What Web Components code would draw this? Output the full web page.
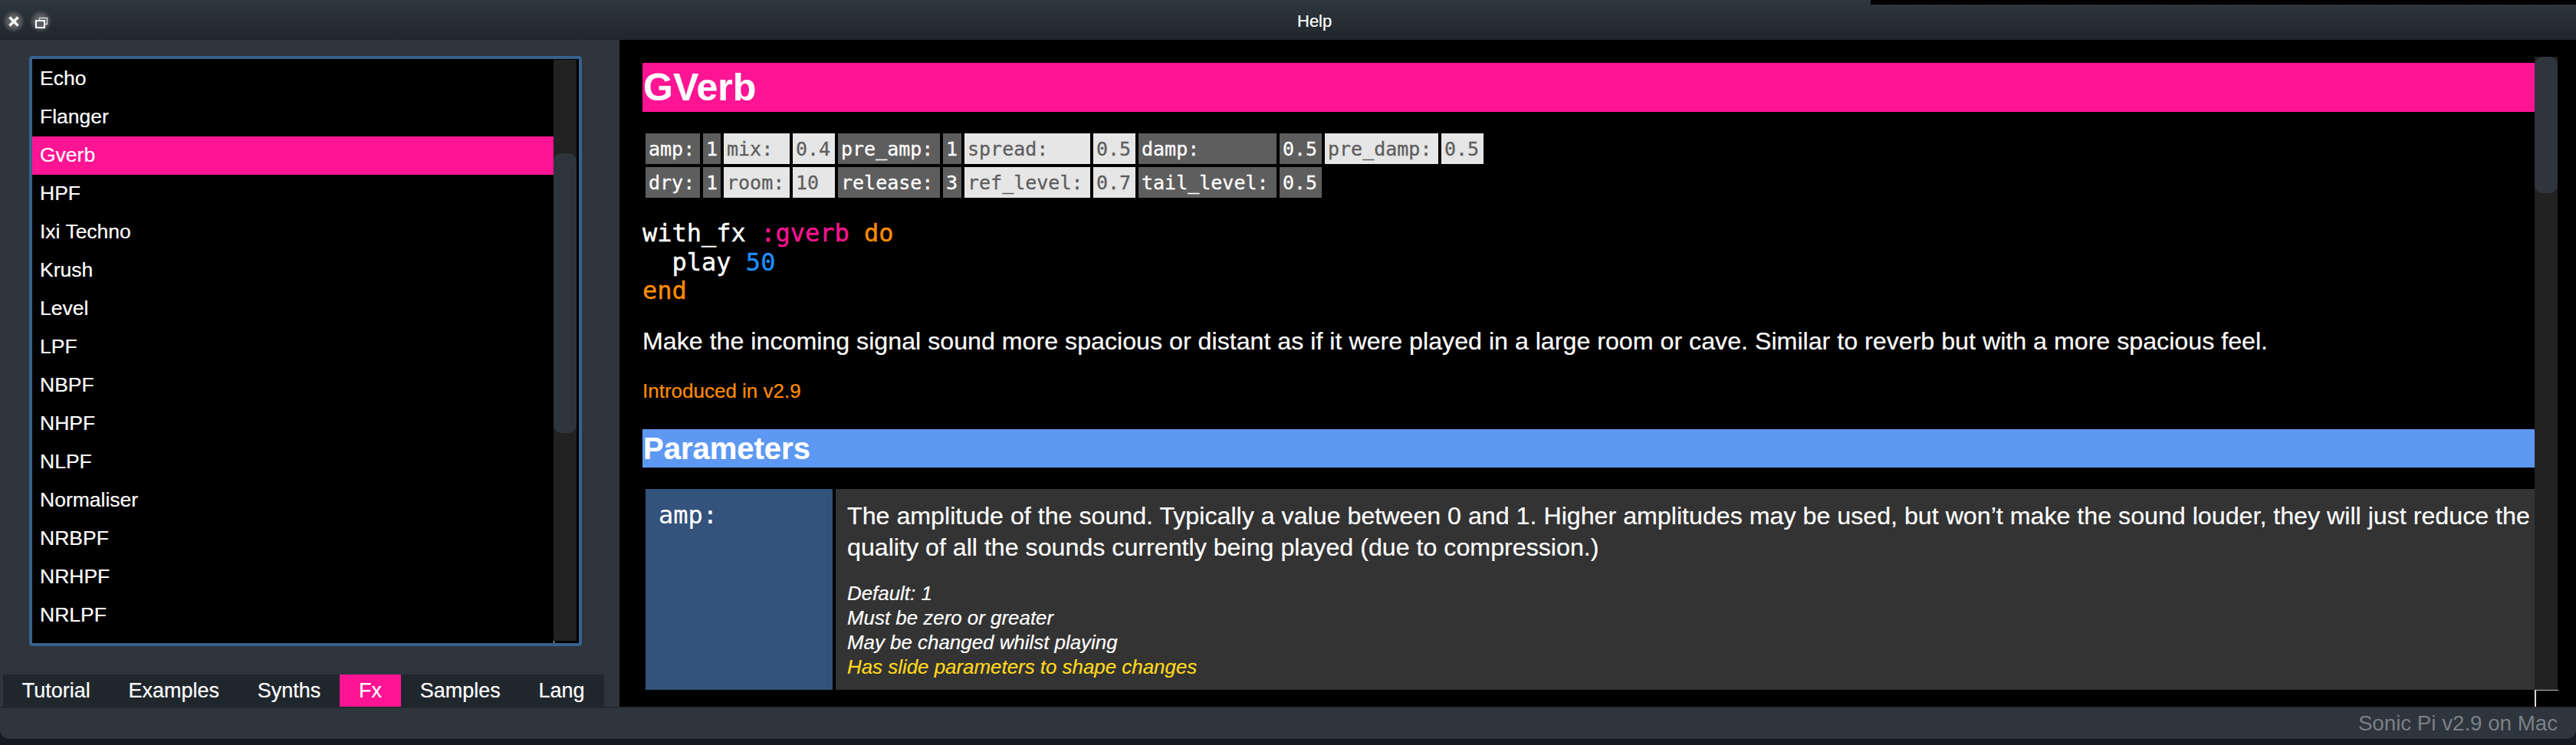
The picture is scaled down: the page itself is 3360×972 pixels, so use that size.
<!DOCTYPE html>
<html>
<head>
<meta charset="utf-8">
<title>Help</title>
<style>
html, body { margin: 0; height: 100%; background: #14181f; overflow: hidden; }
body { font-family: "Liberation Sans", Arial, sans-serif; color: #fff; -webkit-text-stroke: 0.2px; }
</style>
</head>
<body>
<help-window>
  <title-bar slot="title">Help</title-bar>
  <side-panel slot="side">
    <fx-list>
      <fx-item>Echo</fx-item>
      <fx-item>Flanger</fx-item>
      <fx-item selected>Gverb</fx-item>
      <fx-item>HPF</fx-item>
      <fx-item>Ixi Techno</fx-item>
      <fx-item>Krush</fx-item>
      <fx-item>Level</fx-item>
      <fx-item>LPF</fx-item>
      <fx-item>NBPF</fx-item>
      <fx-item>NHPF</fx-item>
      <fx-item>NLPF</fx-item>
      <fx-item>Normaliser</fx-item>
      <fx-item>NRBPF</fx-item>
      <fx-item>NRHPF</fx-item>
      <fx-item>NRLPF</fx-item>
    </fx-list>
    <tab-bar>
      <tab-item>Tutorial</tab-item>
      <tab-item>Examples</tab-item>
      <tab-item>Synths</tab-item>
      <tab-item active>Fx</tab-item>
      <tab-item>Samples</tab-item>
      <tab-item>Lang</tab-item>
    </tab-bar>
  </side-panel>
  <doc-pane slot="doc">
    <doc-heading>GVerb</doc-heading>
    <arg-grid></arg-grid>
    <code-block></code-block>
    <doc-text>
      <p>Make the incoming signal sound more spacious or distant as if it were played in a large room or cave. Similar to reverb but with a more spacious feel.</p>
      <p class="intro">Introduced in v2.9</p>
    </doc-text>
    <doc-heading kind="section">Parameters</doc-heading>
    <param-row name="amp:">
      The amplitude of the sound. Typically a value between 0 and 1. Higher amplitudes may be used, but won’t make the sound louder, they will just reduce the<br>quality of all the sounds currently being played (due to compression.)
      <span slot="notes">Default: 1</span>
      <span slot="notes">Must be zero or greater</span>
      <span slot="notes">May be changed whilst playing</span>
      <span slot="notes" style="color:#ffd91a">Has slide parameters to shape changes</span>
    </param-row>
  </doc-pane>
  <status-bar slot="status">Sonic Pi v2.9 on Mac</status-bar>
</help-window>

<script>
function shadow(el, html) {
  el.attachShadow({ mode: "open" }).innerHTML = html;
}

class HelpWindow extends HTMLElement {
  constructor() {
    super();
    shadow(this, `<style>
      :host { display: flex; flex-direction: column; position: relative; height: 964px; background: #2e353d; border-radius: 0 0 12px 12px; overflow: hidden; }
      .main { display: flex; height: 870px; }
      /* bit of another window peeking over the top right */
      .other { position: absolute; left: 2440px; right: 0; top: 0; height: 6px; background: #000; }
    </style>
    <slot name="title"></slot>
    <div class="main"><slot name="side"></slot><slot name="doc"></slot></div>
    <slot name="status"></slot>
    <div class="other"></div>`);
  }
}

class TitleBar extends HTMLElement {
  constructor() {
    super();
    shadow(this, `<style>
      :host { display: flex; align-items: center; height: 52px; box-sizing: border-box; padding: 4px 0 0 4px; gap: 7px; background: linear-gradient(#2f383f, #1f262b); }
      svg { display: block; width: 28px; height: 28px; }
      .title { margin-left: 1618px; font-size: 22px; color: #fff; }
    </style>
    <svg viewBox="0 0 28 28">
      <defs><radialGradient id="g"><stop offset="0.55" stop-color="#5c5f62"/><stop offset="1" stop-color="#5c5f62" stop-opacity="0.1"/></radialGradient></defs>
      <circle cx="14" cy="14" r="14" fill="url(#g)"/>
      <path d="M8.5 8.5 19.5 19.5M19.5 8.5 8.5 19.5" stroke="#f4f4f4" stroke-width="3.6" fill="none"/>
    </svg>
    <svg viewBox="0 0 28 28">
      <defs><radialGradient id="h"><stop offset="0.55" stop-color="#5c5f62"/><stop offset="1" stop-color="#5c5f62" stop-opacity="0.1"/></radialGradient></defs>
      <circle cx="14" cy="14" r="14" fill="url(#h)"/>
      <rect x="8" y="13" width="11" height="9" fill="none" stroke="#fff" stroke-width="2"/>
      <path d="M12.5 12V9.5H22.5V17.5H20" fill="none" stroke="#d8d8d8" stroke-width="1.4"/>
    </svg>
    <div class="title"><slot></slot></div>`);
  }
}

class SidePanel extends HTMLElement {
  constructor() {
    super();
    shadow(this, `<style>
      :host { display: flex; flex-direction: column; width: 808px; flex: none; box-sizing: border-box; padding: 21px 0 0 0; }
    </style><slot></slot>`);
  }
}

class FxList extends HTMLElement {
  constructor() {
    super();
    shadow(this, `<style>
      :host { display: flex; width: 721px; height: 770px; margin-left: 38px; box-sizing: border-box; border: 4px solid #38618f; border-radius: 4px; background: #000; position: relative; }
      .items { flex: 1; padding-top: 1px; overflow: hidden; }
      .track { width: 30px; margin: 1px 3px 3px 0; background: #222; position: relative; }
      .thumb { margin-top: 122px; height: 365px; background: #2e353d; border-radius: 11px; }
      .tick { position: absolute; left: 680px; bottom: 0; width: 1px; height: 3px; background: #cfd6dc; }
    </style>
    <div class="items"><slot></slot></div>
    <div class="track"><div class="thumb"></div></div>
    <div class="tick"></div>`);
  }
}

class FxItem extends HTMLElement {
  constructor() {
    super();
    shadow(this, `<style>
      :host { display: flex; align-items: center; height: 50px; box-sizing: border-box; padding: 0 0 2px 10px; font-size: 26.5px; color: #fff; }
      :host([selected]) { background: #ff1493; }
    </style><slot></slot>`);
  }
}

class TabBar extends HTMLElement {
  constructor() {
    super();
    shadow(this, `<style>
      :host { display: flex; width: 784px; height: 42px; margin: 37px 0 0 4px; background: #1f272d; }
    </style><slot></slot>`);
  }
}

class TabItem extends HTMLElement {
  constructor() {
    super();
    shadow(this, `<style>
      :host { display: flex; align-items: center; padding: 0 24.85px; font-size: 27px; color: #fff; }
      :host([active]) { background: #ff1493; }
    </style><slot></slot>`);
  }
}

class DocPane extends HTMLElement {
  constructor() {
    super();
    shadow(this, `<style>
      :host { display: flex; flex: 1; min-width: 0; background: #000; position: relative; }
      .view { width: 2468px; margin: 30px 0 0 30px; overflow: hidden; }
      .bar { width: 30px; height: 826px; margin-top: 22px; background: #222; }
      .thumb { height: 178px; background: #2e353d; border-radius: 11px; }
      .corner { position: absolute; left: 2498px; top: 848px; width: 31px; height: 22px; box-sizing: border-box; border-top: 1px solid #bcc2c7; border-left: 2px solid #d6dade; }
    </style>
    <div class="view"><slot></slot></div>
    <div class="bar"><div class="thumb"></div></div>
    <div class="corner"></div>`);
  }
}

class DocHeading extends HTMLElement {
  constructor() {
    super();
    shadow(this, `<style>
      :host { display: flex; align-items: center; height: 64px; padding-left: 1px; font-size: 50px; font-weight: bold; background: #ff1493; color: #fff; }
      :host([kind="section"]) { height: 50px; font-size: 40px; background: #5d98f3; }
    </style><slot></slot>`);
  }
}

// [label, value] pairs, one row each; labels alternate dark / light per column
const ARGS = [
  [["amp:", "1"], ["mix:", "0.4"], ["pre_amp:", "1"], ["spread:", "0.5"], ["damp:", "0.5"], ["pre_damp:", "0.5"]],
  [["dry:", "1"], ["room:", "10"], ["release:", "3"], ["ref_level:", "0.7"], ["tail_level:", "0.5"]],
];

class ArgGrid extends HTMLElement {
  constructor() {
    super();
    const cells = ARGS.map((row) => row.map(([k, v], i) => {
      const tone = i % 2 ? "light" : "dark";
      return `<span class="${tone}">${k}</span><span class="${tone}">${v}</span>`;
    }).join("")).join("");
    shadow(this, `<style>
      :host { display: grid; grid-template-columns: 71px 23px 86px 55px 133px 24px 164px 55px 180px 55px 148px 55px; grid-auto-rows: 40px; gap: 4px; margin: 28px 0 0 4px; font: 25px "DejaVu Sans Mono", monospace; -webkit-text-stroke: 0.3px; }
      span { display: flex; align-items: center; padding-left: 4px; overflow: hidden; white-space: pre; }
      .dark { background: #5e5e5e; color: #fff; }
      .light { background: #e6e6e6; color: #5e5e5e; }
    </style>${cells}`);
  }
}

class CodeBlock extends HTMLElement {
  constructor() {
    super();
    shadow(this, `<style>
      :host { display: block; margin-top: 28px; font: 32px/37.5px "DejaVu Sans Mono", monospace; -webkit-text-stroke: 0.4px; color: #fff; white-space: pre; }
      .sym { color: #ff1493; } .kw { color: #ff8c00; } .num { color: #1e90ff; }
    </style>with_fx <span class="sym">:gverb</span> <span class="kw">do</span>
  play <span class="num">50</span>
<span class="kw">end</span>`);
  }
}

class DocText extends HTMLElement {
  constructor() {
    super();
    shadow(this, `<style>
      :host { display: block; font-size: 32.2px; line-height: 37px; }
      ::slotted(p) { margin: 0; padding-top: 28px; white-space: nowrap; }
      ::slotted(.intro) { padding-top: 31px; font-size: 26px; line-height: 30px; color: #ff8c00; margin-bottom: 35.5px; }
    </style><slot></slot>`);
  }
}

class ParamRow extends HTMLElement {
  constructor() {
    super();
    shadow(this, `<style>
      :host { display: flex; gap: 4px; height: 262px; margin: 28px 0 0 4px; }
      .name { width: 244px; flex: none; box-sizing: border-box; padding: 14px 0 0 17px; background: #33527c; font: 32px/41px "DejaVu Sans Mono", monospace; color: #fff; }
      .body { flex: 1; min-width: 0; box-sizing: border-box; padding: 15px 0 0 15px; background: #333; white-space: nowrap; overflow: hidden; font-size: 32.2px; line-height: 41px; color: #fff; }
      .notes { display: flex; flex-direction: column; margin-top: 23px; font-size: 25.9px; line-height: 32px; font-style: italic; }
    </style>
    <div class="name"></div>
    <div class="body"><slot></slot><div class="notes"><slot name="notes"></slot></div></div>`);
    this.shadowRoot.querySelector(".name").textContent = this.getAttribute("name");
  }
}

class StatusBar extends HTMLElement {
  constructor() {
    super();
    shadow(this, `<style>
      :host { display: flex; align-items: center; justify-content: flex-end; height: 42px; box-sizing: border-box; padding-right: 24px; border-top: 2px solid #26292d; font-size: 27.7px; color: #7b8085; -webkit-text-stroke: 0; }
    </style><slot></slot>`);
  }
}

customElements.define("help-window", HelpWindow);
customElements.define("title-bar", TitleBar);
customElements.define("side-panel", SidePanel);
customElements.define("fx-list", FxList);
customElements.define("fx-item", FxItem);
customElements.define("tab-bar", TabBar);
customElements.define("tab-item", TabItem);
customElements.define("doc-pane", DocPane);
customElements.define("doc-heading", DocHeading);
customElements.define("arg-grid", ArgGrid);
customElements.define("code-block", CodeBlock);
customElements.define("doc-text", DocText);
customElements.define("param-row", ParamRow);
customElements.define("status-bar", StatusBar);
</script>
</body>
</html>
